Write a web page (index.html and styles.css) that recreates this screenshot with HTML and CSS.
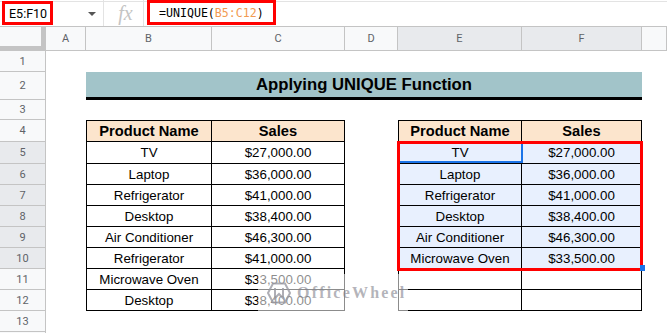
FILE: index.html
```html
<!DOCTYPE html>
<html>
<head>
<meta charset="utf-8">
<link rel="stylesheet" href="styles.css">
</head>
<body>
<div class="fbar">
  <div class="namearea">
    <div class="namebox">E5:F10</div>
    <span class="caret"></span>
  </div>
  <div class="fx">fx</div>
  <div class="formula">=UNIQUE(<span class="rng">B5:C12</span>)</div>
</div>
<div class="sheet">
  <div class="corner"></div>
  <div class="ch">A</div><div class="ch">B</div><div class="ch">C</div><div class="ch">D</div><div class="ch hl">E</div><div class="ch hl">F</div><div class="ch"></div>

  <div class="rh">1</div><div></div><div></div><div></div><div></div><div></div><div></div><div></div>

  <div class="rh">2</div><div></div><div class="title">Applying UNIQUE Function</div><div></div>

  <div class="rh">3</div><div></div><div></div><div></div><div></div><div></div><div></div><div></div>

  <div class="rh">4</div><div></div>
  <div class="t tl th">Product Name</div><div class="t th">Sales</div>
  <div></div>
  <div class="t tl th">Product Name</div><div class="t th">Sales</div>
  <div></div>

  <div class="rh hl">5</div><div></div>
  <div class="t tl">TV</div><div class="t">$27,000.00</div><div></div>
  <div class="t tl sel">TV</div><div class="t sel">$27,000.00</div><div></div>

  <div class="rh hl">6</div><div></div>
  <div class="t tl">Laptop</div><div class="t">$36,000.00</div><div></div>
  <div class="t tl sel">Laptop</div><div class="t sel">$36,000.00</div><div></div>

  <div class="rh hl">7</div><div></div>
  <div class="t tl">Refrigerator</div><div class="t">$41,000.00</div><div></div>
  <div class="t tl sel">Refrigerator</div><div class="t sel">$41,000.00</div><div></div>

  <div class="rh hl">8</div><div></div>
  <div class="t tl">Desktop</div><div class="t">$38,400.00</div><div></div>
  <div class="t tl sel">Desktop</div><div class="t sel">$38,400.00</div><div></div>

  <div class="rh hl">9</div><div></div>
  <div class="t tl">Air Conditioner</div><div class="t">$46,300.00</div><div></div>
  <div class="t tl sel">Air Conditioner</div><div class="t sel">$46,300.00</div><div></div>

  <div class="rh hl">10</div><div></div>
  <div class="t tl">Refrigerator</div><div class="t">$41,000.00</div><div></div>
  <div class="t tl sel">Microwave Oven</div><div class="t sel">$33,500.00</div><div></div>

  <div class="rh">11</div><div></div>
  <div class="t tl">Microwave Oven</div><div class="t">$33,500.00</div><div></div>
  <div class="t tl"></div><div class="t"></div><div></div>

  <div class="rh">12</div><div></div>
  <div class="t tl">Desktop</div><div class="t">$38,400.00</div><div></div>
  <div class="t tl"></div><div class="t"></div><div></div>

  <div class="rh">13</div><div></div><div></div><div></div><div></div><div></div><div></div><div></div>
  <div class="rh"></div><div></div><div></div><div></div><div></div><div></div><div></div><div></div>
</div>

<div class="active"></div>
<div class="range"></div>
<div class="handle"></div>

<div class="watermark">
  <svg class="wm-logo" width="24" height="22" viewBox="0 0 24 22">
    <path d="M6 1.5 H18 L23 11 L18 20.5 H6 L1 11 Z" fill="none" stroke="#9a9aa3" stroke-width="2"/>
    <path d="M8 6 V16 L12 12 L16 16 V6" fill="none" stroke="#9a9aa3" stroke-width="2"/>
  </svg>
  <span class="wm-text">OfficeWheel</span>
</div>
</body>
</html>
```
FILE: styles.css
```css
* { box-sizing: border-box; }
html, body { margin: 0; padding: 0; }
body {
  position: relative;
  width: 667px;
  height: 333px;
  overflow: hidden;
  background: #fff;
  font-family: "Liberation Sans", Arial, sans-serif;
  color: #000;
}

/* formula bar */
.fbar {
  display: flex;
  height: 26px;
  padding-top: 1px;
  border-top: 1px solid #e3e3e3;
  border-bottom: 1px solid #c4c4c4;
  margin-top: 1px;
}
.namearea {
  width: 104px;
  display: flex;
  align-items: center;
  border-right: 1px solid #e3e3e3;
  margin-top: -3px;
}
.namebox {
  margin-left: 2px;
  width: 51px;
  height: 24px;
  border: 3px solid #f00;
  font-family: Roboto, "Liberation Sans", sans-serif;
  font-size: 12.5px;
  display: flex;
  align-items: center;
  padding-left: 4px;
  color: #000;
}
.caret {
  margin-left: 35px;
  width: 0;
  height: 0;
  border-left: 4px solid transparent;
  border-right: 4px solid transparent;
  border-top: 4px solid #555;
  margin-top: 2px;
}
.fx {
  width: 40px;
  display: flex;
  align-items: center;
  justify-content: center;
  padding-left: 4px;
  font-family: "Liberation Serif", serif;
  font-style: italic;
  font-size: 20px;
  color: #c4c4c4;
  border-right: 1px solid #e3e3e3;
  margin-top: -3px;
}
.formula {
  margin-left: 3px;
  margin-top: -3px;
  width: 129px;
  height: 25px;
  border: 3px solid #f00;
  padding-left: 9px;
  display: flex;
  align-items: center;
  font-family: "DejaVu Sans Mono", "Liberation Mono", monospace;
  font-size: 11.6px;
  color: #000;
  white-space: pre;
}
.rng { color: #f29b52; }

/* sheet grid */
.sheet {
  display: grid;
  grid-template-columns: 46px 40px 126px 133px 53px 124px 120px 25px;
  grid-template-rows: 24px 21px 28px 20px 22px 22px repeat(8, 21px) 2px;
}
.corner {
  background: #f8f9fa;
  border-right: 1px solid #c4c4c4;
  border-bottom: 1px solid #c4c4c4;
  box-shadow: inset -4px -4px 0 #c4c4c4;
}
.ch {
  background: #f8f9fa;
  border-right: 1px solid #c4c4c4;
  border-bottom: 1px solid #c4c4c4;
  display: flex;
  align-items: center;
  justify-content: center;
  font-family: Roboto, "Liberation Sans", sans-serif;
  font-size: 11px;
  color: #5f6368;
}
.rh {
  background: #f8f9fa;
  border-right: 1px solid #c4c4c4;
  border-bottom: 1px solid #c4c4c4;
  display: flex;
  align-items: center;
  justify-content: center;
  font-family: Roboto, "Liberation Sans", sans-serif;
  font-size: 11px;
  color: #5f6368;
}
.ch.hl, .rh.hl { background: #e8eaed; }

.title {
  grid-column: span 5;
  background: #a2c4c9;
  border-bottom: 3px solid #000;
  display: flex;
  align-items: center;
  justify-content: center;
  font-weight: bold;
  font-size: 16.7px;
}

.t {
  border-right: 1px solid #000;
  border-bottom: 1px solid #000;
  display: flex;
  align-items: center;
  justify-content: center;
  font-size: 13.33px;
  white-space: nowrap;
}
.tl { border-left: 1px solid #000; }
.th {
  background: #fce5cd;
  border-top: 1px solid #000;
  font-weight: bold;
  font-size: 14.67px;
}
.sel { background: #e8f0fe; }

/* selection overlays */
.active {
  position: absolute;
  left: 398px;
  top: 142px;
  width: 125px;
  height: 21px;
  border-right: 2px solid #1a73e8;
  border-bottom: 2px solid #1a73e8;
}
.range {
  position: absolute;
  left: 397px;
  top: 141px;
  width: 246px;
  height: 130px;
  border: 3px solid #f00;
}
.handle {
  position: absolute;
  left: 640px;
  top: 265px;
  width: 5px;
  height: 6px;
  background: #1a73e8;
}

/* watermark */
.watermark {
  position: absolute;
  left: 258px;
  top: 274px;
  width: 150px;
  height: 37px;
  background: rgba(255, 255, 255, 0.55);
  display: flex;
  align-items: center;
  gap: 6px;
  padding-left: 9px;
}
.wm-logo { opacity: 0.8; }
.wm-text {
  font-family: "Liberation Serif", serif;
  font-weight: bold;
  font-size: 16px;
  letter-spacing: 2.2px;
  color: rgba(130, 130, 140, 0.6);
}
```
